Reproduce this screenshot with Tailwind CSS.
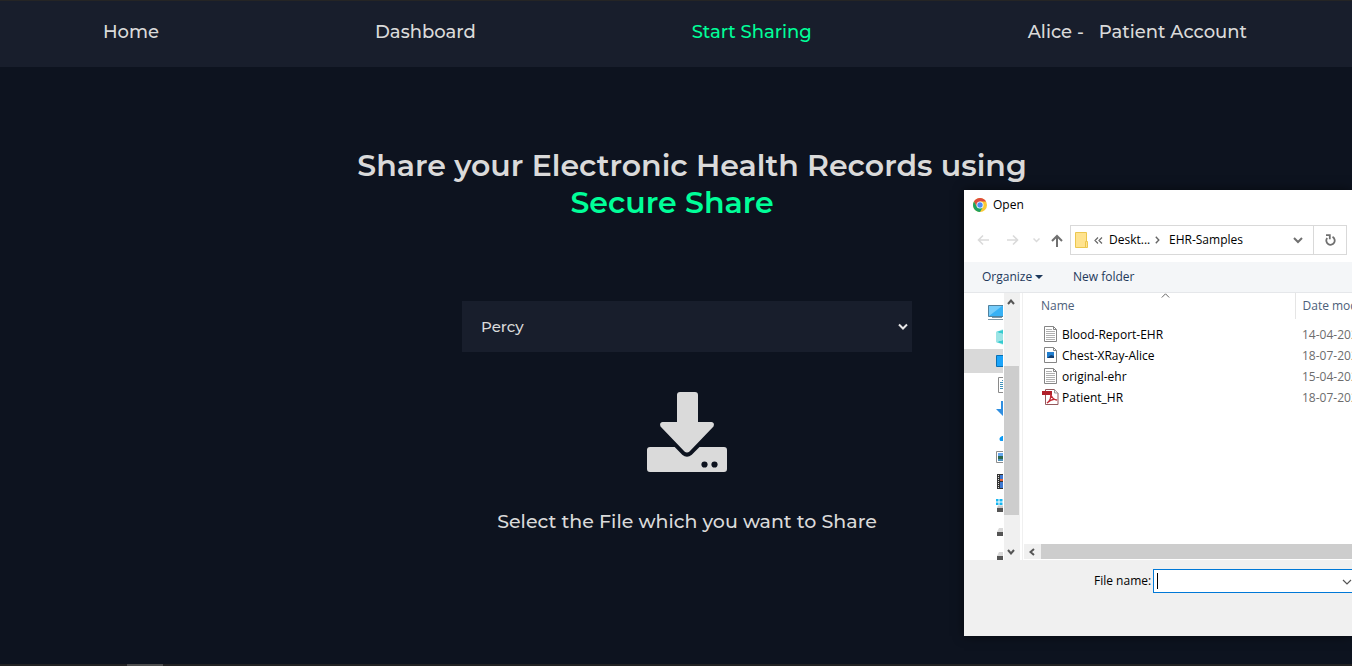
<!DOCTYPE html>
<html lang="en">
<head>
<meta charset="utf-8">
<meta name="viewport" content="width=device-width, initial-scale=1">
<title>Secure Share</title>
<script src="https://cdn.jsdelivr.net/npm/@tailwindcss/browser@4"></script>
</head>
<body class="relative flex min-h-screen flex-col overflow-hidden bg-[#0d131f] font-['Montserrat','Inter',sans-serif] text-[#dadada]">
<header class="border-t border-[#252525] bg-[#181e2c]">
  <nav class="flex h-[66px] items-center justify-between pr-[105px] pb-1 pl-[103px] text-[18px] font-medium">
    <a href="#">Home</a>
    <a href="#">Dashboard</a>
    <a href="#" class="text-[#00ff99]">Start Sharing</a>
    <a href="#" class="flex gap-[15px]"><span>Alice -</span><span>Patient Account</span></a>
  </nav>
</header>

<main class="flex flex-1 flex-col items-center pt-20 pl-[22px]">
  <h1 class="pl-[10px] text-center text-[30px] leading-[37px] font-semibold">Share your Electronic Health Records using<span class="block pr-10 text-[#00ff99]">Secure Share</span></h1>
  <div class="relative mt-20 w-[450px]">
    <select aria-label="Recipient" class="h-[51px] w-full appearance-none bg-[#181e2c] px-[19px] pt-px text-[15px] font-medium">
      <option>Percy</option>
    </select>
    <svg class="pointer-events-none absolute top-[22px] right-1 h-[8px] w-[10px]" viewBox="0 0 10 8" fill="none" stroke="#e8e8e8" stroke-width="2"><path d="M1 1.5 5 5.5 9 1.5"/></svg>
  </div>
  <button type="button" aria-label="Select file" class="mt-10">
    <svg class="h-[81px] w-[82px]" viewBox="0 0 82 81" fill="#dadada">
      <path d="M33 0h16a3 3 0 0 1 3 3v27h13.500q3.500.5 2 4.500L43.500 59.500q-2.500 2-5 0L14.500 34.500q-1.500-4 2-4.500H31V3a3 3 0 0 1 3-3Z"/>
      <path d="M4 55h24.700l7.500 7.800q4.800 4 9.600 0l7.700-7.800H78a3 3 0 0 1 3 3v19a3 3 0 0 1-3 3H4a3 3 0 0 1-3-3V58a3 3 0 0 1 3-3Z"/>
      <circle cx="58.500" cy="72.500" r="3.100" fill="#0d131f"/><circle cx="68.500" cy="72.500" r="3.100" fill="#0d131f"/>
    </svg>
  </button>
  <p class="mt-[35px] text-[19px] leading-7 font-medium">Select the File which you want to Share</p>
</main>

<footer class="h-0.5 bg-[#222223] pl-[127px]"><div class="h-full w-9 bg-[#4d4d4d]"></div></footer>

<section role="dialog" aria-label="Open" class="absolute top-[190px] right-0 flex h-[446px] w-[388px] flex-col overflow-hidden bg-white font-['Segoe_UI','Open_Sans',sans-serif] text-[12px] leading-4 text-black shadow-[0_0_10px_#0008]">
  <div class="flex h-[29px] items-center gap-1.5 pl-[9px]">
    <svg class="size-[14px]" viewBox="0 0 14 14"><circle cx="7" cy="7" r="7" fill="#fbc934"/><path d="M.94 3.500A7 7 0 0 1 13.060 3.500H7L4 8.700Z" fill="#dd4b3e"/><path d="M.94 3.500A7 7 0 0 0 7 14L10.030 8.750 7 7 3.970 8.750Z" fill="#1da261"/><circle cx="7" cy="7" r="3.500" fill="#fff"/><circle cx="7" cy="7" r="2.700" fill="#4c8bf5"/></svg>
    <span>Open</span>
  </div>
  <div class="flex h-[43px] items-center pb-[1px] pl-[13px]">
    <button type="button" aria-label="Back" class="w-[29px]"><svg class="h-[12px] w-[13px]" viewBox="0 0 13 12" fill="none" stroke="#dadada" stroke-width="1.600"><path d="M12 6H1.500M6 1.500 1.500 6 6 10.500"/></svg></button>
    <button type="button" aria-label="Forward" class="w-[27px]"><svg class="h-[12px] w-[13px]" viewBox="0 0 13 12" fill="none" stroke="#dadada" stroke-width="1.600"><path d="M1 6h10.500M7 1.500 11.500 6 7 10.500"/></svg></button>
    <button type="button" aria-label="Recent locations" class="w-[18px]"><svg class="h-[5px] w-[7px]" viewBox="0 0 7 5" fill="none" stroke="#dadada" stroke-width="1.500"><path d="m.5.5 3 3 3-3"/></svg></button>
    <button type="button" aria-label="Up" class="w-[19px]"><svg class="h-[13px] w-[12px]" viewBox="0 0 12 13" fill="none" stroke="#707070" stroke-width="2"><path d="M6 13V2M1 7l5-5 5 5"/></svg></button>
    <div class="flex h-[30px] w-[277px] items-center border border-[#d9d9d9] pl-1">
      <svg class="mr-1.5 h-[16px] w-[13px]" viewBox="0 0 13 16"><path d="M.5.5h11v15H.5z" fill="#ffe38f" stroke="#ecc74f"/><path d="M10.500 9.500h2v6h-2z" fill="#ffe38f" stroke="#ecc74f"/></svg>
      <svg class="mr-1.5 h-[7px] w-[9px]" viewBox="0 0 9 7" fill="none" stroke="#666" stroke-width="1.200"><path d="m4 .5-3 3 3 3M8 .5l-3 3 3 3"/></svg>
      <button type="button" class="w-[46px] text-left">Deskt...</button>
      <svg class="mr-[9px] h-[8px] w-[5px]" viewBox="0 0 5 8" fill="none" stroke="#666" stroke-width="1.400"><path d="m.8.8 3 3.200-3 3.200"/></svg>
      <button type="button">EHR-Samples</button>
      <button type="button" aria-label="Previous locations" class="ml-auto pr-[10px]"><svg class="h-[7px] w-[10px]" viewBox="0 0 10 7" fill="none" stroke="#707070" stroke-width="2"><path d="m1 1 4 4 4-4"/></svg></button>
      <button type="button" aria-label="Refresh" class="flex h-full w-[33px] items-center justify-center border-l border-[#d9d9d9]"><svg class="h-[12px] w-[11px]" viewBox="0 0 11 12" fill="none" stroke="#707070" stroke-width="1.800"><path d="M7.500 2.900A4.200 4.200 0 1 1 2.200 4M1 1.200h3.800v4"/></svg></button>
    </div>
  </div>
  <div class="flex h-[31px] items-center border-b border-[#e5e7ea] bg-[#f4f6f8] pl-[18px] text-[#1e395b]">
    <button type="button" class="flex w-[91px] items-center gap-[3px]">Organize <svg class="h-[4px] w-[8px]" viewBox="0 0 8 4" fill="#1e395b"><path d="M0 0h8L4 4Z"/></svg></button>
    <button type="button">New folder</button>
  </div>

  <div class="flex h-[267px]">
    <div class="h-full w-[39px] overflow-hidden pt-2">
      <div class="flex h-6 items-center pl-6"><svg class="h-[16px] w-[18px] shrink-0" viewBox="0 0 18 16"><path d="M.5.500h17v11H.5z" fill="#37b1f5" stroke="#51819d"/><path d="M1 11V1h13Z" fill="#75ccfa"/><path d="M4 12.500h10M0 14.500h18" stroke="#7c98a8"/></svg></div>
      <div class="flex h-6 items-center pl-8"><svg class="h-[16px] w-[14px] shrink-0" viewBox="0 0 14 16"><path d="M0 3 7 0l7 3v10l-7 3-7-3Z" fill="#c5f0ef"/><path d="m0 3 7-2v4Zm0 10 7-2v4Z" fill="#35cbd0"/><path d="m0 3 7 2v6l-7 2Z" fill="#9ce4e5"/></svg></div>
      <div class="flex h-6 items-center bg-[#d9d9d9] pl-8"><svg class="h-[12px] w-[16px] shrink-0" viewBox="0 0 16 12"><path d="M.5.500h15v11H.5z" fill="#1ba4fa" stroke="#0870b4"/></svg></div>
      <div class="flex h-6 items-center pl-[34px]"><svg class="h-[16px] w-[12px] shrink-0" viewBox="0 0 12 16"><path d="M.5.500h11v15H.5z" fill="#fff" stroke="#8a8a8a"/><path d="M2 5.500h8M2 7.500h8M2 9.500h8M2 11.500h8M4 3.500h6" stroke="#4092ba"/></svg></div>
      <div class="flex h-6 items-center pl-8"><svg class="h-[16px] w-[14px] shrink-0" viewBox="0 0 14 16"><path d="M5 0h4v8h5l-7 7-7-7h5Z" fill="#2f8ee0"/></svg></div>
      <div class="flex h-6 items-end pb-1 pl-[34px]"><svg class="h-[5px] w-[14px] shrink-0" viewBox="0 0 14 5"><path d="M2.500 5a2.500 2.500 0 0 1 0-4Q5-1 8 0l5 5Z" fill="#0a9af4"/></svg></div>
      <div class="flex h-6 items-center pl-8"><svg class="h-[12px] w-[16px] shrink-0" viewBox="0 0 16 12"><path d="M.5.500h15v11H.5z" fill="#fff" stroke="#8c8c8c"/><path d="M2 2h12v4H2z" fill="#67a8ef"/><path d="M2 5h12v3H2z" fill="#2d6950"/><path d="M2 8h12v2H2z" fill="#4d91bc"/></svg></div>
      <div class="flex h-6 items-center pl-[33px]"><svg class="h-[15px] w-[14px] shrink-0" viewBox="0 0 14 15"><path d="M0 0h14v15H0z" fill="#333"/><path d="M3 1h8v6H3zM3 8h8v6H3z" fill="#3f78d0"/><path d="M3 5h8v2H3z" fill="#e6633a"/><path d="M1.500 1v14" stroke="#ddd" stroke-dasharray="1 1"/></svg></div>
      <div class="flex h-6 items-center pl-8"><svg class="h-[13px] w-[16px] shrink-0" viewBox="0 0 16 13"><path d="M0 0h2.500v2.500H0zm3.500 0h3v2.500h-3zM0 3.500h2.500V6H0zm3.500 0h3V6h-3z" fill="#15b5ef"/><path d="M2 6.500h14V9H1Z" fill="#c8c8c8"/><path d="M1 9h15v4H1z" fill="#555"/></svg></div>
      <div class="flex h-6 items-end pb-[5px] pl-[33px]"><svg class="h-[8px] w-[14px] shrink-0" viewBox="0 0 14 8"><path d="M2 0h12v4H0Z" fill="#d8d8d8"/><path d="M0 4h14v4H0z" fill="#555"/></svg></div>
      <div class="flex h-6 items-end pb-[5px] pl-[33px]"><svg class="h-[8px] w-[14px] shrink-0" viewBox="0 0 14 8"><path d="M2 0h12v4H0Z" fill="#d8d8d8"/><path d="M0 4h14v4H0z" fill="#555"/></svg></div>
    </div>
    <div class="ml-px flex h-full w-4 flex-col items-start bg-[#f0f0f0]">
      <button type="button" aria-label="Scroll up" class="flex h-[73px] pt-[6px] pl-[3px]"><svg class="h-[6px] w-[8px]" viewBox="0 0 8 6" fill="none" stroke="#555" stroke-width="2"><path d="m1 5 3-3.500L7 5"/></svg></button>
      <div class="h-[149px] w-[15px] bg-[#cdcdcd]"></div>
      <button type="button" aria-label="Scroll down" class="flex flex-1 items-end pb-[5px] pl-[3px]"><svg class="h-[6px] w-[8px]" viewBox="0 0 8 6" fill="none" stroke="#555" stroke-width="2"><path d="m1 1 3 3.500L7 1"/></svg></button>
    </div>
    <div class="ml-0.5 flex h-full min-w-0 flex-1 flex-col border-l border-[#f0f0f0]">
      <div class="relative flex-1 overflow-hidden">
        <svg class="absolute top-0 left-[138px] h-[5px] w-[9px]" viewBox="0 0 9 5" fill="none" stroke="#666"><path d="m.8 4.500 3.700-3.700 3.700 3.700"/></svg>
        <table class="w-[420px] table-fixed border-collapse text-left whitespace-nowrap">
          <thead>
            <tr class="h-[26px] text-[#4c607a]"><th class="w-[272px] pl-[18px] font-normal">Name</th><th class="border-l border-[#e5e5e5] pl-[7px] font-normal">Date modified</th></tr>
          </thead>
          <tbody class="before:block before:h-[5px]">
            <tr class="h-[21px]"><td class="pl-[21px]"><span class="flex items-center gap-[5px]"><svg class="mb-px h-[16px] w-[13px]" viewBox="0 0 13 16"><path d="M.5.500h9l3 3v12H.5z" fill="#fff" stroke="#858585"/><path d="M9.500.5v3h3" fill="none" stroke="#858585"/><path d="M2 3.500h6M2 5.500h9M2 7.500h9M2 9.500h9M2 11.500h9M2 13.500h9" stroke="#b0b0b0"/></svg>Blood-Report-EHR</span></td><td class="pl-[7px] text-[#6d6d6d]">14-04-2021</td></tr>
            <tr class="h-[21px]"><td class="pl-[21px]"><span class="flex items-center gap-[5px]"><svg class="mb-px h-[16px] w-[13px]" viewBox="0 0 13 16"><path d="M.5.500h9l3 3v12H.5z" fill="#fff" stroke="#858585"/><path d="M9.500.5v3h3" fill="none" stroke="#858585"/><path d="M3 5h7v6H3z" fill="#227fd0"/><path d="m3 11 4-3 3 1v2Z" fill="#123e70"/></svg>Chest-XRay-Alice</span></td><td class="pl-[7px] text-[#6d6d6d]">18-07-2021</td></tr>
            <tr class="h-[21px]"><td class="pl-[21px]"><span class="flex items-center gap-[5px]"><svg class="mb-px h-[16px] w-[13px]" viewBox="0 0 13 16"><path d="M.5.500h9l3 3v12H.5z" fill="#fff" stroke="#858585"/><path d="M9.500.5v3h3" fill="none" stroke="#858585"/><path d="M2 3.500h6M2 5.500h9M2 7.500h9M2 9.500h9M2 11.500h9M2 13.500h9" stroke="#b0b0b0"/></svg>original-ehr</span></td><td class="pl-[7px] text-[#6d6d6d]">15-04-2021</td></tr>
            <tr class="h-[21px]"><td class="pl-[19px]"><span class="flex items-center gap-[3px]"><svg class="mb-px h-[16px] w-[17px]" viewBox="0 0 17 16"><path d="M3.500.5h9l3.500 3.500v11.500H3.500z" fill="#fff" stroke="#93585c"/><path d="M12.500.5V4H16" fill="#eee" stroke="#999"/><path d="M0 2h10v4H0z" fill="#b11f29"/><path d="M8.500 5c1.500 4 3.500 6 6.500 6-3-1.500-7 0-10 3C8 12 9.500 8 8.500 5Z" fill="none" stroke="#c22c36" stroke-width="1.300"/></svg>Patient_HR</span></td><td class="pl-[7px] text-[#6d6d6d]">18-07-2021</td></tr>
          </tbody>
        </table>
      </div>
      <div class="mb-px ml-px flex h-[15px] bg-[#f0f0f0]">
        <button type="button" aria-label="Scroll left" class="flex w-[17px] items-center pl-[5px]"><svg class="h-[8px] w-[6px]" viewBox="0 0 6 8" fill="none" stroke="#555" stroke-width="2"><path d="M5 1 1.500 4 5 7"/></svg></button>
        <div class="flex-1 bg-[#cdcdcd]"></div>
      </div>
    </div>
  </div>

  <div class="flex flex-1 items-start bg-[#f0f0f0] pt-[9px] pl-[130px]">
    <label for="filename" class="w-[59px] leading-6">File name:</label>
    <div class="relative flex-1">
      <input id="filename" type="text" class="h-6 w-full border border-r-0 border-[#0078d7] bg-white px-1 outline-none">
      <span class="absolute top-1 left-1 h-4 w-px bg-black"></span>
      <svg class="absolute top-[10px] right-0 h-[6px] w-[10px]" viewBox="0 0 10 6" fill="none" stroke="#555" stroke-width="1.200"><path d="m1 1 4 4 4-4"/></svg>
    </div>
  </div>
</section>
</body>
</html>
